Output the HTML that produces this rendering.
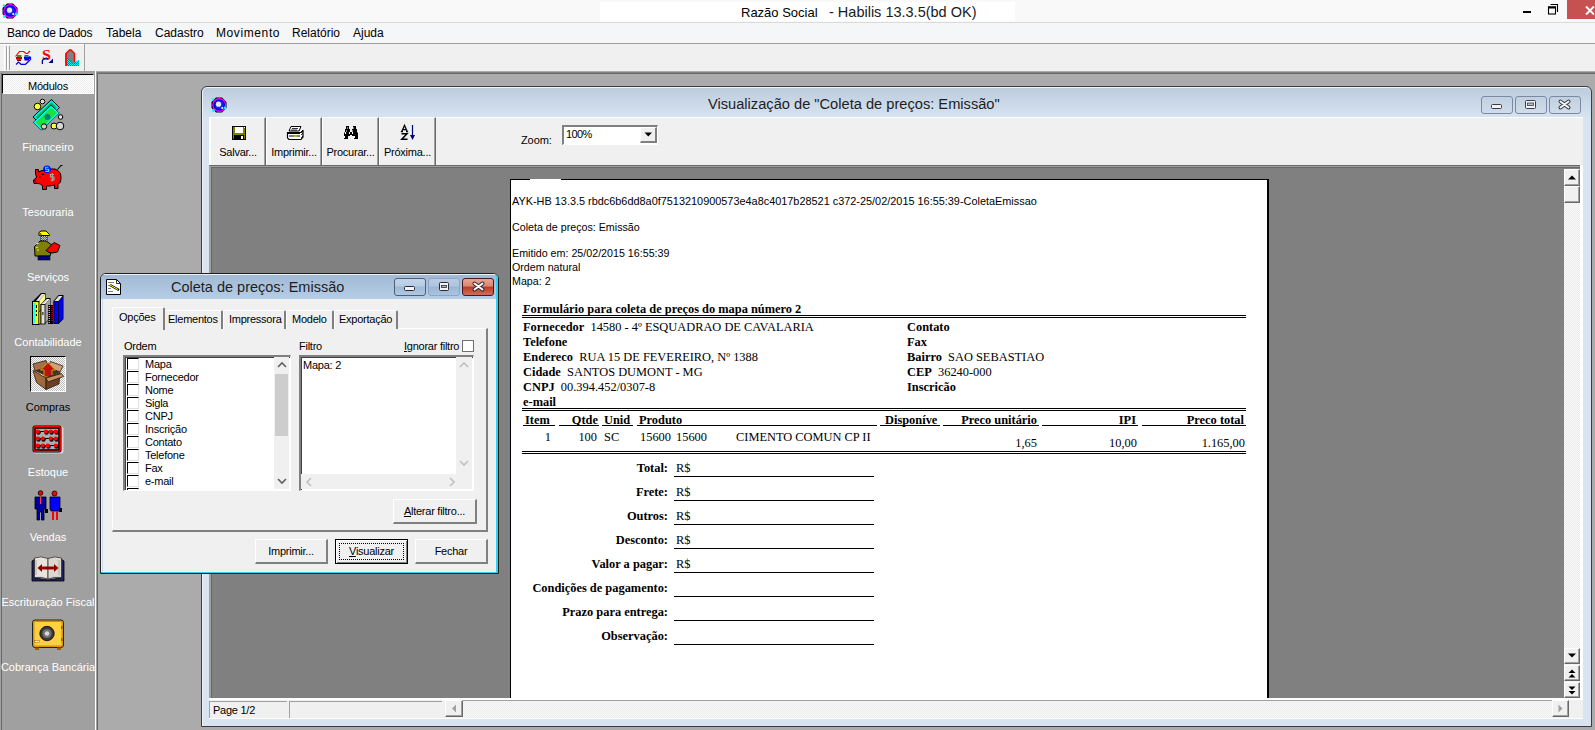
<!DOCTYPE html>
<html><head><meta charset="utf-8">
<style>
*{margin:0;padding:0;box-sizing:border-box}
html,body{width:1595px;height:730px;overflow:hidden;background:#ababab;font-family:"Liberation Sans",sans-serif;font-size:12px;color:#000}
.a{position:absolute}
.t{position:absolute;white-space:nowrap;line-height:1}
svg{position:absolute;overflow:visible}
/* main window */
#titlebar{left:0;top:0;width:1595px;height:23px;background:#f9f9f9;border-bottom:1px solid #dadada}
#menubar{left:0;top:23px;width:1595px;height:21px;background:#f5f6f7;border-bottom:1px solid #a0a0a0}
#toolbar{left:0;top:44px;width:1595px;height:27px;background:#f0f0f0}
#panel{left:0;top:71px;width:96px;height:659px;background:#a0a0a0}
#mdi{left:96px;top:72px;width:1499px;height:658px;background:#ababab;border-left:1px solid #a0a0a0;border-top:1px solid #808080;box-shadow:inset 1px 1px 0 #696969}
.menu{top:27px;font-size:12px;color:#000}
.lbl{color:#fff;width:96px;text-align:center;left:0;letter-spacing:0 !important}
/* preview window */
#pw{left:201px;top:86px;width:1391px;height:641px;background:linear-gradient(#bccbdc 0,#d6e3f1 30px,#d8e4f1 31px);border:1px solid #3c3c3c;border-radius:6px 6px 0 0;box-shadow:inset 0 1px 0 #eef3f9,inset 1px 0 0 #eef3f9}
.tbtn{top:117px;height:48px;background:#f0f0f0;border-top:1px solid #fff;border-left:1px solid #fff;border-right:1px solid #696969;box-shadow:inset -1px 0 0 #a0a0a0}
.tbtn .t{font-size:11px;letter-spacing:-0.25px;width:100%;text-align:center;top:29px;left:0}
.wbtn{top:96px;height:18px;border:1px solid #7a8aa6;border-radius:3px;background:linear-gradient(#c2d0df,#d0dcea)}

.b{font-weight:bold}
#serif .t{margin-top:1px}
.r{text-align:right}
.dl{height:3px;border-top:1px solid #000;border-bottom:1px solid #000}
.hd{top:425px;height:1px;background:#000}
.ul{left:674px;width:200px;height:1px;background:#000}

.dbtn{top:278px;height:18px;border:1px solid #4e5f78;border-radius:3px}
.tab{top:310px;height:19px;background:#f0f0f0;border-top:1px solid #fff;border-left:1px solid #fff;border-right:2px solid #808080;border-radius:2px 2px 0 0}
.sf{font-size:11px;letter-spacing:-0.25px}
.sunk{background:#fff;border-top:2px solid #808080;border-left:2px solid #808080;border-right:1px solid #fff;border-bottom:1px solid #fff;box-shadow:inset 1px 1px 0 #404040}
.cb{width:12px;height:12px;border:1px solid #000;border-right-color:#e0e0e0;border-bottom-color:#e0e0e0;background:#fff}
.btn{background:#f0f0f0;border-top:1px solid #fff;border-left:1px solid #fff;border-right:2px solid #808080;border-bottom:2px solid #808080}

.hatch{background:repeating-conic-gradient(#fafafa 0 25%,#ececec 0 50%) 0 0/2px 2px}
.sbtn{width:16px;background:#f0f0f0;border-top:1px solid #fff;border-left:1px solid #fff;border-right:1px solid #696969;border-bottom:1px solid #696969;box-shadow:inset -1px -1px 0 #a0a0a0}
</style></head>
<body>
<div id="titlebar" class="a"></div>
<div class="a" style="left:600px;top:2px;width:415px;height:19px;background:#fff"></div>
<div class="t" style="left:741px;top:6px;font-size:13px;color:#000">Razão Social</div>
<div class="t" style="left:829px;top:5px;font-size:14.5px;color:#1a1a1a">- Habilis 13.3.5(bd OK)</div>
<div class="a" style="left:1567px;top:0;width:28px;height:19px;background:#c75050"></div>

<div id="menubar" class="a"></div>
<div class="t menu" style="left:7px;letter-spacing:-0.25px">Banco de Dados</div>
<div class="t menu" style="left:106px">Tabela</div>
<div class="t menu" style="left:155px">Cadastro</div>
<div class="t menu" style="left:216px;letter-spacing:0.6px">Movimento</div>
<div class="t menu" style="left:292px">Relatório</div>
<div class="t menu" style="left:353px">Ajuda</div>

<div id="toolbar" class="a"></div>
<div class="a" style="left:84px;top:44px;width:1px;height:27px;background:#c8c8c8"></div>


<!-- main title icon & controls -->
<svg width="16" height="16" viewBox="0 0 16 16" style="left:2px;top:3px">
<path d="M5 0.5 H11 L15.5 5 V11 L11 15.5 H5 L0.5 11 V5 Z" fill="#000"/>
<circle cx="8.2" cy="8" r="7" fill="#ff00ff"/>
<circle cx="8.2" cy="8" r="5.8" fill="#0000e0"/>
<circle cx="8.5" cy="8" r="4.2" fill="#2020ff"/>
<circle cx="7.5" cy="7.2" r="2.6" fill="#e8e8f0"/>
<circle cx="11.2" cy="11" r="1" fill="#fff"/>
<circle cx="1.8" cy="2.5" r="1.3" fill="#00ffff"/>
<circle cx="2.3" cy="13.5" r="1.4" fill="#00ffff"/>
<circle cx="14" cy="11" r="1.4" fill="#00ffff"/>
</svg>
<div class="a" style="left:1523px;top:11px;width:8px;height:2px;background:#000"></div>
<svg style="left:1546px;top:3px" width="14" height="12" viewBox="0 0 14 12"><path d="M4.5 1.5 H11.5 V9" stroke="#000" stroke-width="1.1" fill="none"/><rect x="2.5" y="4" width="7" height="7" stroke="#000" stroke-width="1.1" fill="none"/><rect x="2" y="3.5" width="8" height="2" fill="#000"/></svg>
<svg style="left:1585px;top:5.5px" width="10" height="9" viewBox="0 0 10 9"><path d="M1 0.5 L9 8.5 M9 0.5 L1 8.5" stroke="#fff" stroke-width="1.8"/></svg>
<!-- toolbar grip & icons -->
<div class="a" style="left:0;top:44px;width:84px;height:1px;background:#fff"></div>
<div class="a" style="left:84px;top:44px;width:1px;height:27px;background:#a0a0a0"></div>
<div class="a" style="left:4px;top:46px;width:1px;height:24px;background:#fff"></div>
<div class="a" style="left:6px;top:46px;width:1px;height:24px;background:#a0a0a0"></div>
<div class="a" style="left:7px;top:46px;width:1px;height:24px;background:#fff"></div>
<div class="a" style="left:9px;top:46px;width:1px;height:24px;background:#a0a0a0"></div>
<svg style="left:0;top:44px" width="85" height="27" viewBox="0 44 85 27">
 <path d="M15.5 56.5 L19.5 51.5 H23.5 L26 53.5 H27.5 L30 51" stroke="#ff0000" stroke-width="1.2" fill="none"/>
 <path d="M16 57 h6 v2.5 h-6 z" fill="#c00000"/><path d="M17 55 h4.5 v2 h-4.5 z" fill="#608000"/><path d="M17 59.5 h4 v1.5 h-4 z" fill="#800000"/>
 <path d="M24 56.5 h6 v2.5 h-6 z" fill="#0000ff"/><path d="M24.5 55 h4 v1.5 h-4 z" fill="#008060"/><path d="M24.5 59 h4.5 v1.5 h-4.5 z" fill="#000080"/>
 <path d="M16 64.5 L18.5 62 L21 64.3 H25.5 L30.5 59.5 V57.5 L29.5 56.5" stroke="#0000ff" stroke-width="1.2" fill="none"/>
 <text x="46.5" y="60.5" font-family="Liberation Serif" font-weight="bold" font-size="14" fill="#ff0000" text-anchor="middle" transform="translate(46.5 60.5) scale(1.15 1) translate(-46.5 -60.5)">S</text>
 <path d="M42.5 64 Q41.5 60 44.5 58.5 Q47 57.5 48 59" stroke="#000080" stroke-width="1.3" fill="none"/>
 <path d="M48.5 63 L53 58.5 V63 Z" fill="#000080"/>
 <path d="M66 66 V53.5 L69.5 50 H71 L74.5 53.5 V62.5" fill="#808080" stroke="#ff0000" stroke-width="1.4"/>
 <path d="M67 57.5 L73 63.5 L79 60 V66 H67 Z" fill="#1060ff"/>
 <path d="M67 57.5 L73 63.5 L79 60 V66 H67 Z" fill="url(#chk)"/>
 <defs><pattern id="chk" width="2" height="2" patternUnits="userSpaceOnUse"><rect width="1" height="1" fill="#00ffff"/><rect x="1" y="1" width="1" height="1" fill="#00ffff"/></pattern></defs>
 <path d="M66 66 V53.5" stroke="#ff0000" stroke-width="1.4"/>
</svg>
<div id="panel" class="a"></div>
<div class="a" style="left:1px;top:73px;width:1px;height:657px;background:#696969"></div>
<div class="a" style="left:95px;top:71px;width:1px;height:659px;background:#fff"></div>
<div id="mdi" class="a"></div>
<div class="a" style="left:2px;top:74px;width:92px;height:20px;background:#fafafa;border-top:1px solid #000;border-left:1px solid #000;border-right:1px solid #fff;border-bottom:1px solid #fff;background:repeating-conic-gradient(#ffffff 0 25%,#ececec 0 50%) 0 0/2px 2px"></div>
<div class="t sf" style="left:2px;width:92px;text-align:center;top:81px">Módulos</div>
<div class="t sf lbl" style="top:142px">Financeiro</div>
<div class="t sf lbl" style="top:207px">Tesouraria</div>
<div class="t sf lbl" style="top:272px">Serviços</div>
<div class="t sf lbl" style="top:337px">Contabilidade</div>
<div class="t sf lbl" style="top:402px;color:#000">Compras</div>
<div class="t sf lbl" style="top:467px">Estoque</div>
<div class="t sf lbl" style="top:532px">Vendas</div>
<div class="t sf lbl" style="top:597px">Escrituração Fiscal</div>
<div class="t sf lbl" style="top:662px">Cobrança Bancária</div>
<div class="a" style="left:30px;top:356px;width:36px;height:36px;border-top:1px solid #000;border-left:1px solid #000;border-right:1px solid #fff;border-bottom:1px solid #fff;background:repeating-conic-gradient(#ffffff 0 25%,#b8b8b8 0 50%) 0 0/2px 2px"></div>
<svg style="left:0;top:0" width="96" height="730" viewBox="0 0 96 730">
 <!-- Financeiro -->
 <circle cx="37.5" cy="106.5" r="3.3" fill="#ffff40" stroke="#000" stroke-width="1"/>
 <circle cx="42.5" cy="101.5" r="2.3" fill="#e0e0e0" stroke="#000" stroke-width="1"/>
 <polygon points="33,117 51.5,99.5 59.5,107.5 41,125" fill="#008080" stroke="#000" stroke-width="1"/>
 <polygon points="34.5,117 51.5,101 58,107.5 41,123.5" fill="#00c060" stroke="#00ffff" stroke-width="1.2"/>
 <polygon points="33,122.5 51,104.5 59.5,113 41.5,130.5" fill="#000" />
 <polygon points="34.5,122.5 51,106.5 58,113 41.5,129" fill="#20e040" stroke="#00ffff" stroke-width="1.4"/>
 <circle cx="47.5" cy="117" r="3" fill="#008080"/>
 <circle cx="60.5" cy="117" r="2.3" fill="#e0e0e0" stroke="#000" stroke-width="1"/>
 <circle cx="44" cy="126.5" r="2.7" fill="#d0d0d0" stroke="#000" stroke-width="1"/>
 <circle cx="54" cy="126" r="3" fill="#ffff40" stroke="#000" stroke-width="1"/>
 <circle cx="60" cy="126" r="3.8" fill="#d8d8d8" stroke="#000" stroke-width="1"/>
 <!-- Tesouraria pig -->
 <path d="M35.5 169.5 H38.5 V172 L42 170.5 H45 L48 169 H55 L58 170.5 L60.5 173.5 L61 178 L60.5 182 L58 184.5 V188.5 H54.5 V185 L50 186 H46.5 V189.5 H42.5 V186 L40.5 184 L38 183.5 H34 L33.5 180 L36.5 177.5 L35.5 173 Z" fill="#ff0000" stroke="#000" stroke-width="1"/>
 <path d="M41 175 L43 173.5 L44.5 175 Z" fill="#000"/>
 <rect x="39" y="176" width="1.3" height="2" fill="#000"/>
 <path d="M34.5 180.5 L36.5 182" stroke="#000" stroke-width="0.8"/>
 <path d="M57.5 169.5 L61 165.5 H62.5" stroke="#000" stroke-width="1.1" fill="none"/>
 <circle cx="47" cy="169.3" r="3.8" fill="#0000ff"/>
 <path d="M48.6 167.2 h-3 v2 h3 v2.2 h-3.2" stroke="#00ffff" stroke-width="1.1" fill="none"/>
 <path d="M54 174.5 h-3.5 v2.5 h3.5 v3 h-3.5 M52.3 173 V181.5" stroke="#a8a8a8" stroke-width="1.1" fill="none"/>
 <!-- Servicos worker -->
 <path d="M39 235.5 V232.5 L41 231 H46 L49.5 234.5 V235.5 Z" fill="#ffff00" stroke="#000" stroke-width="1"/>
 <rect x="39.5" y="233" width="2" height="2.5" fill="#808000"/>
 <path d="M41 236 H47 V241 H41 Z" fill="#ff4040" stroke="#000" stroke-width="0.8"/>
 <path d="M41 236 H47 V241 H41 Z" fill="url(#chk2)"/>
 <path d="M34.5 246.5 L40 241 H46 L52 245 L51 252 L50 256 H35 Z" fill="#808000" stroke="#000" stroke-width="1"/>
 <path d="M36 244 L39 243 M35.5 248 L38 247 M37 250 L39 250" stroke="#fff" stroke-width="0.8"/>
 <path d="M46 250.5 L54 242.5 L60 245.5 L57.5 252 L52 253 L49 252.5 Z" fill="#ff0000" stroke="#000" stroke-width="1"/>
 <rect x="38" y="256" width="12" height="4" fill="#000080" stroke="#000" stroke-width="0.6"/>
 <defs><pattern id="chk2" width="2" height="2" patternUnits="userSpaceOnUse"><rect width="1" height="1" fill="#c0c0c0"/><rect x="1" y="1" width="1" height="1" fill="#c0c0c0"/></pattern></defs>
 <!-- Contabilidade books -->
 <path d="M32.5 301.5 L41 293 H45.5 V305 L39 313 V324 H32.5 Z" fill="#000"/>
 <path d="M36 301 L41.5 294 H45 L39 301 Z" fill="#e0e0e0"/>
 <path d="M39 301 L45 294 V305 L39 312 Z" fill="#ffff80"/>
 <rect x="32.5" y="301.5" width="6.5" height="23" fill="#ffff00" stroke="#000" stroke-width="1"/>
 <rect x="33.3" y="302.5" width="1.6" height="21" fill="#00ffff"/>
 <rect x="35.8" y="305" width="1.2" height="3" fill="#000"/><rect x="35.8" y="310" width="1.2" height="2" fill="#000"/><rect x="35.8" y="314" width="1.2" height="2" fill="#000"/>
 <path d="M39 312 L45 305 V323 L39 324 Z" fill="#ffff00" stroke="#000" stroke-width="0.6"/>
 <path d="M40.5 304.5 L46.5 298 H50.5 V318 L45 324 H40.5 Z" fill="#000"/>
 <path d="M41.5 304 L46.8 299 H50 L45 304 Z" fill="#e8e8e8"/>
 <path d="M45 304 L50 299 V318 L45 323 Z" fill="#a0a0a0"/>
 <rect x="41" y="304.5" width="4" height="19.5" fill="#e0e0e0" stroke="#000" stroke-width="0.8"/>
 <rect x="42.4" y="312" width="1" height="3" fill="#000"/>
 <rect x="48" y="305" width="5" height="19" fill="#000"/>
 <path d="M49.2 306 V323" stroke="#fff" stroke-width="1" stroke-dasharray="1 1"/>
 <path d="M52 306 V322" stroke="#ff0000" stroke-width="1.2" stroke-dasharray="1 1"/>
 <path d="M53.5 301 L58.5 295 H63.5 V319 L58.5 324 H53.5 Z" fill="#000"/>
 <path d="M54.5 301 L58.8 296 H62.5 L58.5 301 Z" fill="#e0e0e0"/>
 <path d="M58.5 301.5 L62.8 296.5 V318.5 L58.5 323 Z" fill="#0000ff"/>
 <rect x="54" y="301.5" width="4.5" height="22" fill="#0000ff" stroke="#000" stroke-width="0.8"/>
 <rect x="55" y="303.5" width="1" height="1.5" fill="#000"/>
 <!-- Compras box -->
 <path d="M35 371 L47 366.5 L60 372 L48 377 Z" fill="#4a2c18"/>
 <path d="M33 364 L46 360.5 L48 367 L35 371 Z" fill="#a87048" stroke="#2a1a10" stroke-width="0.8"/>
 <path d="M50.5 361.5 L63 366 L60 372 L48 367 Z" fill="#d4a07a" stroke="#2a1a10" stroke-width="0.8"/>
 <path d="M48 362.5 L55.5 370 H52 V377 H44 V370 H40.5 Z" fill="#c01010" stroke="#c0c000" stroke-width="0.9"/>
 <path d="M33 370.5 L46 378 V389.5 L36.5 382.5 Z" fill="#a06a40" stroke="#2a1a10" stroke-width="0.8"/>
 <path d="M46 378 L60 372.5 L59 384 L46 389.5 Z" fill="#6a4024" stroke="#2a1a10" stroke-width="0.8"/>
 <path d="M46 378 L61.5 373.5 L63.5 376.5 L48 382 Z" fill="#c89060" stroke="#2a1a10" stroke-width="0.8"/>
 <!-- Estoque abacus -->
 <rect x="33.5" y="426.5" width="30" height="27" rx="2.5" fill="#d8d8d8"/>
 <rect x="32.5" y="425.5" width="29" height="27" rx="2.5" fill="#000"/>
 <rect x="33.8" y="426.8" width="26.4" height="24.4" rx="1.5" fill="none" stroke="#ff0000" stroke-width="1.4"/>
 <rect x="35.3" y="428.3" width="23.4" height="21.4" fill="#a8b0b0" stroke="#000" stroke-width="0.8"/>
 <path d="M35.5 431.5 H59 M35.5 438.5 H59 M35.5 445.5 H59" stroke="#000" stroke-width="1.2"/>
 <g fill="#000">
  <circle cx="38.5" cy="432.5" r="2.2"/><circle cx="46.5" cy="432.5" r="2.2"/><circle cx="51.5" cy="432.5" r="2.2"/><circle cx="56.5" cy="432.5" r="2.2"/>
  <circle cx="38.5" cy="439.5" r="2.2"/><circle cx="43.5" cy="439.5" r="2.2"/><circle cx="51.5" cy="439.5" r="2.2"/><circle cx="56.5" cy="439.5" r="2.2"/>
  <circle cx="38.5" cy="446.5" r="2.2"/><circle cx="43.5" cy="446.5" r="2.2"/><circle cx="48.5" cy="446.5" r="2.2"/><circle cx="56.5" cy="446.5" r="2.2"/>
 </g>
 <g fill="#ff0000">
  <circle cx="37.7" cy="431.5" r="2"/><circle cx="45.7" cy="431.5" r="2"/><circle cx="50.7" cy="431.5" r="2"/><circle cx="55.7" cy="431.5" r="2"/>
  <circle cx="37.7" cy="438.5" r="2"/><circle cx="42.7" cy="438.5" r="2"/><circle cx="50.7" cy="438.5" r="2"/><circle cx="55.7" cy="438.5" r="2"/>
  <circle cx="37.7" cy="445.5" r="2"/><circle cx="42.7" cy="445.5" r="2"/><circle cx="47.7" cy="445.5" r="2"/><circle cx="55.7" cy="445.5" r="2"/>
 </g>
 <!-- Vendas -->
 <circle cx="40.5" cy="493" r="2.3" fill="#ff0000" stroke="#000" stroke-width="0.8"/>
 <path d="M35 497 h11 v12 h-2 v11 h-2.5 v-8 h-2 v8 h-2.5 v-11 h-2 z" fill="#0000a0" stroke="#000" stroke-width="0.8"/>
 <rect x="40" y="497" width="1.3" height="7" fill="#ff4040"/>
 <rect x="45" y="509" width="3" height="4" fill="#000"/>
 <circle cx="54.5" cy="493.5" r="2.5" fill="#ff0000" stroke="#000" stroke-width="0.8"/>
 <path d="M50 497 h10 v12 l-1 2 h-8 l-1 -2 z" fill="#0000ff" stroke="#000" stroke-width="0.8"/>
 <rect x="52" y="511" width="2" height="9" fill="#ff0000"/><rect x="56" y="511" width="2" height="9" fill="#ff0000"/>
 <rect x="59" y="508" width="3" height="4" fill="#000"/>
 <!-- Escrituracao book -->
 <path d="M32 561 L35 559 V578 L48 580 L61 578 V559 L64 561 V581 H32 Z" fill="#202060" stroke="#000" stroke-width="0.8"/>
 <path d="M34.5 558 Q41 555.5 48 558.5 V579 Q41 576.5 34.5 577.5 Z" fill="#e8e4dc" stroke="#303030" stroke-width="0.8"/>
 <path d="M61.5 558 Q55 555.5 48 558.5 V579 Q55 576.5 61.5 577.5 Z" fill="#dcd8d0" stroke="#303030" stroke-width="0.8"/>
 <path d="M36 560 V575 M59 560 V575" stroke="#b0aca4" stroke-width="1"/>
 <path d="M37.5 568 L42 564 V566.5 H54 V564 L58.5 568 L54 572 V569.5 H42 V572 Z" fill="#900000"/>
 <!-- Cobranca safe -->
 <rect x="32.5" y="620" width="31" height="27.5" rx="2.5" fill="#e8a818" stroke="#202020" stroke-width="1"/>
 <rect x="34" y="621.5" width="28" height="24.5" rx="1.5" fill="#ffd040" stroke="#c08000" stroke-width="0.8"/>
 <circle cx="47" cy="633.5" r="7.2" fill="#383838" stroke="#000" stroke-width="0.8"/>
 <circle cx="47" cy="633.5" r="4.6" fill="#707070"/>
 <circle cx="47" cy="633.5" r="2.3" fill="#d8d8d8"/>
 <rect x="61" y="626" width="1.5" height="3" fill="#a06000"/><rect x="61" y="638" width="1.5" height="3" fill="#a06000"/>
 <rect x="34.5" y="640.5" width="5" height="2" fill="#fff0a0" stroke="#a06000" stroke-width="0.5"/>
 <rect x="35" y="647.5" width="4" height="2.5" fill="#a06000"/><rect x="57" y="647.5" width="4" height="2.5" fill="#a06000"/>
</svg>

<!-- preview window -->
<div id="pw" class="a"></div>
<div class="t" style="left:708px;top:97px;font-size:14.65px;color:#1e1e1e">Visualização de "Coleta de preços: Emissão"</div>
<div class="a wbtn" style="left:1481px;width:32px"></div>
<div class="a wbtn" style="left:1515px;width:32px"></div>
<div class="a wbtn" style="left:1549px;width:32px"></div>
<div class="a" style="left:209px;top:117px;width:1374px;height:49px;background:#f0f0f0;border-top:1px solid #fff;border-left:1px solid #fff"></div><svg width="16" height="16" viewBox="0 0 16 16" style="left:211px;top:97px">
<path d="M5 0.5 H11 L15.5 5 V11 L11 15.5 H5 L0.5 11 V5 Z" fill="#000"/>
<circle cx="8.2" cy="8" r="7" fill="#ff00ff"/>
<circle cx="8.2" cy="8" r="5.8" fill="#0000e0"/>
<circle cx="8.5" cy="8" r="4.2" fill="#2020ff"/>
<circle cx="7.5" cy="7.2" r="2.6" fill="#e8e8f0"/>
<circle cx="11.2" cy="11" r="1" fill="#fff"/>
<circle cx="1.8" cy="2.5" r="1.3" fill="#00ffff"/>
<circle cx="2.3" cy="13.5" r="1.4" fill="#00ffff"/>
<circle cx="14" cy="11" r="1.4" fill="#00ffff"/>
</svg>
<svg style="left:1481px;top:96px" width="100" height="18" viewBox="1481 96 100 18">
 <rect x="1491.5" y="104.5" width="10" height="4" rx="1" fill="#f4f4f4" stroke="#3a3a4a" stroke-width="1"/>
 <rect x="1525.5" y="100.5" width="10" height="8" rx="1" fill="#f4f4f4" stroke="#3a3a4a" stroke-width="1"/>
 <rect x="1527.5" y="103" width="6" height="2.5" fill="#b0c0d4" stroke="#3a3a4a" stroke-width="0.8"/>
 <path d="M1560.5 101.5 L1568.5 107.5 M1568.5 101.5 L1560.5 107.5" stroke="#3a3a4a" stroke-width="4" stroke-linecap="round"/>
 <path d="M1560.5 101.5 L1568.5 107.5 M1568.5 101.5 L1560.5 107.5" stroke="#f4f4f4" stroke-width="2" stroke-linecap="round"/>
</svg>

<div class="a tbtn" style="left:210px;width:56px"><div class="t">Salvar...</div></div>
<div class="a tbtn" style="left:266px;width:56px"><div class="t">Imprimir...</div></div>
<div class="a tbtn" style="left:322px;width:57px"><div class="t">Procurar...</div></div>
<div class="a tbtn" style="left:379px;width:57px"><div class="t">Próxima...</div></div>
<!-- preview toolbar icons -->
<svg style="left:225px;top:120px" width="200" height="25" viewBox="225 120 200 25">
 <rect x="232" y="126" width="14" height="14" fill="#000"/>
 <rect x="233" y="127" width="12" height="12" fill="#808000"/>
 <rect x="235" y="126" width="8" height="7" fill="#000"/>
 <rect x="235" y="127" width="8" height="6" fill="#fff"/>
 <rect x="234" y="135" width="10" height="4" fill="#000"/>
 <rect x="241" y="136" width="2" height="3" fill="#fff"/>
 <rect x="244" y="127" width="1" height="1" fill="#fff"/>
 <!-- printer -->
 <path d="M291 126.5 H301 L299 131 H289 Z" fill="#fff" stroke="#000" stroke-width="1"/>
 <path d="M292 128.5 H298 M291 130 H297" stroke="#000" stroke-width="0.8"/>
 <path d="M287.5 132.5 H301 L303 131 V137 L301 139.5 H289 L287.5 138 Z" fill="#fff" stroke="#000" stroke-width="1.2"/>
 <path d="M288 133.5 H300 M289 136 H300" stroke="#000" stroke-width="1"/>
 <rect x="294" y="135.6" width="3" height="1" fill="#e0e000"/>
 <path d="M301 132 L303 130 M301 135 L303 133 M301 138 L303 136" stroke="#000" stroke-width="0.8"/>
 <!-- binoculars -->
 <path d="M346 126 h3 v3 h1 v3 h2 v-3 h1 v-3 h3 v3 h1 v3 l1 1 v6 h-4 v-3 h-2 v-1 h-2 v1 h-2 v3 h-4 v-6 l1 -1 v-3 h1 z" fill="#000"/>
 <rect x="347" y="127.5" width="1" height="1" fill="#fff"/><rect x="353" y="127.5" width="1" height="1" fill="#fff"/>
 <rect x="346" y="130.5" width="1" height="1" fill="#fff"/><rect x="352" y="130.5" width="1" height="1" fill="#fff"/>
 <rect x="345" y="132" width="1" height="2" fill="#fff"/><rect x="349" y="132" width="1" height="2" fill="#fff"/><rect x="352" y="132" width="1" height="2" fill="#fff"/>
 <rect x="344" y="136" width="1" height="2" fill="#fff"/><rect x="354" y="136" width="1" height="2" fill="#fff"/>
 <!-- AZ -->
 <path d="M401.8 131.5 L404.5 125.3 L407.2 131.5 M403 129.6 H406 M400.8 131.6 H403 M406 131.6 H408.2" stroke="#000" stroke-width="1.3" fill="none"/>
 <path d="M401.5 133.8 H407 L401.8 139.3 H407.5" stroke="#000" stroke-width="1.5" fill="none"/>
 <path d="M412.5 125 V136" stroke="#000080" stroke-width="1.2"/>
 <path d="M410 135 H415 L412.5 140 Z" fill="#000080"/>
</svg>

<div class="t" style="left:521px;top:135px;font-size:11px;letter-spacing:-0.1px">Zoom:</div>
<div class="a" style="left:562px;top:125px;width:96px;height:20px;background:#fff;border-top:2px solid #808080;border-left:2px solid #808080;border-right:1px solid #fff;border-bottom:1px solid #fff"></div>
<div class="t" style="left:566px;top:129px;font-size:11px;letter-spacing:-0.6px">100%</div>
<div class="a" style="left:640px;top:127px;width:17px;height:16px;background:#f0f0f0;border-top:1px solid #fff;border-left:1px solid #fff;border-right:2px solid #808080;border-bottom:2px solid #808080"></div>
<svg style="left:644px;top:132px" width="9" height="5"><path d="M0.5 0.5 H8 L4.25 4.5 Z" fill="#000"/></svg>


<!-- gray area -->
<div class="a" style="left:209px;top:165px;width:1374px;height:533px;background:#fff"></div><div class="a" style="left:209px;top:165px;width:1371px;height:533px;background:#808080;border-top:1px solid #696969;border-left:1px solid #a0a0a0;box-shadow:inset 1px 1px 0 #a0a0a0,inset 2px 2px 0 #696969"></div>
<div class="a" style="left:510px;top:179px;width:759px;height:519px;background:#fff;border-top:1px solid #000;border-left:1px solid #000;border-right:2px solid #000"></div>
<!-- vscroll -->
<div class="a hatch" style="left:1564px;top:169px;width:16px;height:529px"></div>
<div class="a sbtn" style="left:1564px;top:169px;height:17px"></div>
<svg style="left:1567px;top:174px" width="10" height="6"><path d="M1 5.5 L5 1.5 L9 5.5 Z" fill="#000"/></svg>
<div class="a sbtn" style="left:1564px;top:186px;height:17px"></div>
<div class="a sbtn" style="left:1564px;top:648px;height:16px"></div>
<svg style="left:1567px;top:653px" width="10" height="6"><path d="M1 0.5 L5 4.5 L9 0.5 Z" fill="#000"/></svg>
<div class="a sbtn" style="left:1564px;top:665px;height:16px"></div>
<svg style="left:1568px;top:669px" width="8" height="9"><path d="M0.5 4 L4 0.5 L7.5 4 Z M0.5 8.5 L4 5 L7.5 8.5 Z" fill="#000"/></svg>
<div class="a sbtn" style="left:1564px;top:682px;height:16px"></div>
<svg style="left:1568px;top:686px" width="8" height="9"><path d="M0.5 0.5 L4 4 L7.5 0.5 Z M0.5 5 L4 8.5 L7.5 5 Z" fill="#000"/></svg>
<!-- status bar -->
<div class="a" style="left:209px;top:698px;width:1374px;height:21px;background:#f0f0f0;border-top:2px solid #fff;border-bottom:1px solid #fff"></div>
<div class="a" style="left:209px;top:701px;width:78px;height:17px;border-top:1px solid #a0a0a0;border-left:1px solid #a0a0a0"></div>
<div class="t sf" style="left:213px;top:705px">Page 1/2</div>
<div class="a" style="left:289px;top:701px;width:153px;height:17px;border-top:1px solid #a0a0a0;border-left:1px solid #a0a0a0"></div>
<div class="a hatch" style="left:445px;top:700px;width:1124px;height:17px;border-top:1px solid #a0a0a0"></div>
<div class="a sbtn" style="left:445px;top:700px;width:18px;height:17px"></div>
<svg style="left:451px;top:704px" width="6" height="10"><path d="M5 0.5 L1 4.5 L5 8.5 Z" fill="#a0a0a0"/></svg>
<div class="a sbtn" style="left:1552px;top:700px;width:17px;height:17px"></div>
<svg style="left:1558px;top:704px" width="6" height="10"><path d="M0.5 0.5 L4.5 4.5 L0.5 8.5 Z" fill="#a0a0a0"/></svg>


<!-- paper content -->
<div class="a" style="left:530px;top:179px;width:31px;height:1px;background:#fff"></div>
<div id="paper" style="font-family:'Liberation Sans',sans-serif;font-size:10.7px">
<div class="t" style="left:512px;top:196px;font-size:10.9px">AYK-HB 13.3.5 rbdc6b6dd8a0f7513210900573e4a8c4017b28521 c372-25/02/2015 16:55:39-ColetaEmissao</div>
<div class="t" style="left:512px;top:222px">Coleta de preços: Emissão</div>
<div class="t" style="left:512px;top:248px">Emitido em: 25/02/2015 16:55:39</div>
<div class="t" style="left:512px;top:262px">Ordem natural</div>
<div class="t" style="left:512px;top:276px">Mapa: 2</div>
</div>
<div id="serif" style="font-family:'Liberation Serif',serif;font-size:12.4px">
<div class="t b" style="left:523px;top:302px">Formulário para coleta de preços do mapa número 2</div>
<div class="a dl" style="left:522px;top:315px;width:724px"></div>
<div class="t" style="left:523px;top:320px"><b>Fornecedor</b>&nbsp; 14580 - 4º ESQUADRAO DE CAVALARIA</div>
<div class="t" style="left:523px;top:335px"><b>Telefone</b></div>
<div class="t" style="left:523px;top:350px"><b>Endereco</b>&nbsp; RUA 15 DE FEVEREIRO, Nº 1388</div>
<div class="t" style="left:523px;top:365px"><b>Cidade</b>&nbsp; SANTOS DUMONT - MG</div>
<div class="t" style="left:523px;top:380px"><b>CNPJ</b>&nbsp; 00.394.452/0307-8</div>
<div class="t" style="left:523px;top:395px"><b>e-mail</b></div>
<div class="t" style="left:907px;top:320px"><b>Contato</b></div>
<div class="t" style="left:907px;top:335px"><b>Fax</b></div>
<div class="t" style="left:907px;top:350px"><b>Bairro</b>&nbsp; SAO SEBASTIAO</div>
<div class="t" style="left:907px;top:365px"><b>CEP</b>&nbsp; 36240-000</div>
<div class="t" style="left:907px;top:380px"><b>Inscricão</b></div>
<div class="a dl" style="left:522px;top:408px;width:724px"></div>
<div class="a hd" style="left:523px;width:32px"></div><div class="t b" style="left:525px;top:413px">Item</div>
<div class="a hd" style="left:559px;width:40px"></div><div class="t b r" style="left:559px;width:39px;top:413px">Qtde</div>
<div class="a hd" style="left:602px;width:31px"></div><div class="t b" style="left:604px;top:413px">Unid</div>
<div class="a hd" style="left:637px;width:240px"></div><div class="t b" style="left:639px;top:413px">Produto</div>
<div class="a hd" style="left:880px;width:60px"></div><div class="t b" style="left:885px;top:413px">Disponíve</div>
<div class="a hd" style="left:943px;width:96px"></div><div class="t b r" style="left:943px;width:94px;top:413px">Preco unitário</div>
<div class="a hd" style="left:1042px;width:96px"></div><div class="t b r" style="left:1042px;width:94px;top:413px">IPI</div>
<div class="a hd" style="left:1142px;width:104px"></div><div class="t b r" style="left:1142px;width:102px;top:413px">Preco total</div>
<div class="t r" style="left:523px;width:28px;top:430px">1</div>
<div class="t r" style="left:559px;width:38px;top:430px">100</div>
<div class="t" style="left:604px;top:430px">SC</div>
<div class="t" style="left:640px;top:430px">15600</div>
<div class="t" style="left:676px;top:430px">15600</div>
<div class="t" style="left:736px;top:430px">CIMENTO COMUN CP II</div>
<div class="t r" style="left:943px;width:94px;top:436px">1,65</div>
<div class="t r" style="left:1042px;width:95px;top:436px">10,00</div>
<div class="t r" style="left:1142px;width:103px;top:436px">1.165,00</div>
<div class="a dl" style="left:522px;top:451px;width:724px"></div>
<div class="t b r" style="left:520px;width:148px;top:461px">Total:</div>
<div class="t b r" style="left:520px;width:148px;top:485px">Frete:</div>
<div class="t b r" style="left:520px;width:148px;top:509px">Outros:</div>
<div class="t b r" style="left:520px;width:148px;top:533px">Desconto:</div>
<div class="t b r" style="left:520px;width:148px;top:557px">Valor a pagar:</div>
<div class="t b r" style="left:520px;width:148px;top:581px">Condições de pagamento:</div>
<div class="t b r" style="left:520px;width:148px;top:605px">Prazo para entrega:</div>
<div class="t b r" style="left:520px;width:148px;top:629px">Observação:</div>
<div class="t" style="left:676px;top:461px">R$</div>
<div class="t" style="left:676px;top:485px">R$</div>
<div class="t" style="left:676px;top:509px">R$</div>
<div class="t" style="left:676px;top:533px">R$</div>
<div class="t" style="left:676px;top:557px">R$</div>
<div class="a ul" style="top:476px"></div>
<div class="a ul" style="top:500px"></div>
<div class="a ul" style="top:524px"></div>
<div class="a ul" style="top:548px"></div>
<div class="a ul" style="top:572px"></div>
<div class="a ul" style="top:596px"></div>
<div class="a ul" style="top:620px"></div>
<div class="a ul" style="top:644px"></div>
</div>

<!-- dialog -->
<div class="a" style="left:100px;top:273px;width:399px;height:301px;background:#f0f0f0;border:1px solid #202020;border-radius:6px 6px 0 0;overflow:hidden">
 <div class="a" style="left:0;top:0;width:397px;height:25px;background:linear-gradient(#a2b9d3,#b6cde7);border-top:1px solid #e8f0f8"></div>
 <div class="a" style="left:395px;top:0;width:2px;height:300px;background:#2fd0f0"></div>
 <div class="a" style="left:0;top:25px;width:1px;height:275px;background:#f4f8fc"></div><div class="a" style="left:1px;top:25px;width:1px;height:273px;background:#c4d8ee"></div>
 <div class="a" style="left:0;top:298px;width:397px;height:2px;background:#2fd0f0"></div>
</div>
<div class="t" style="left:171px;top:280px;font-size:14.5px;color:#1e1e1e">Coleta de preços: Emissão</div>
<div class="a dbtn" style="left:394px;width:32px;background:linear-gradient(#c3d5ea 0,#b5cbe4 45%,#9fb8d5 50%,#b0c8e4 100%)"></div>
<div class="a dbtn" style="left:428px;width:32px;border-color:#8ea4c0;background:linear-gradient(#b8cde6 0,#aec5e0 45%,#9cb5d3 50%,#aac3e0 100%)"></div>
<div class="a dbtn" style="left:462px;width:32px;border-color:#4a1818;background:linear-gradient(#e8a592 0,#d98572 45%,#bb3b22 50%,#cf6f5a 100%)"></div>

<svg style="left:100px;top:273px" width="399" height="26" viewBox="100 273 399 26">
 <path d="M106.5 279.5 H116.5 L120.5 283.5 V294.5 H106.5 Z" fill="#fff" stroke="#000" stroke-width="1"/>
 <path d="M116.5 279.5 V283.5 H120.5" fill="none" stroke="#000" stroke-width="0.8"/>
 <path d="M108 282.5 H114 M108 285.5 H112 M108 288.5 H111 M108 291.5 H113" stroke="#606060" stroke-width="0.8"/>
 <path d="M110 285 L119 290" stroke="#000" stroke-width="2.2"/>
 <path d="M110 285 L118 289.5" stroke="#ffff00" stroke-width="1"/>
 <rect x="404.5" y="286.5" width="10" height="4" rx="1" fill="#f4f4f4" stroke="#2a2a3a" stroke-width="1"/>
 <rect x="439.5" y="282.5" width="9" height="8" rx="1" fill="#f4f4f4" stroke="#2a2a3a" stroke-width="1"/>
 <rect x="441.5" y="285.5" width="5" height="2" fill="#a8b8cc" stroke="#2a2a3a" stroke-width="0.8"/>
 <path d="M474.5 283.5 L482.5 289.5 M482.5 283.5 L474.5 289.5" stroke="#2a2a3a" stroke-width="4" stroke-linecap="round"/>
 <path d="M474.5 283.5 L482.5 289.5 M482.5 283.5 L474.5 289.5" stroke="#fff" stroke-width="2" stroke-linecap="round"/>
</svg>
<!-- tabs -->
<div class="a" style="left:112px;top:328px;width:376px;height:204px;border-top:1px solid #fff;border-left:1px solid #fff;border-right:2px solid #808080;border-bottom:2px solid #808080"></div>
<div class="a tab" style="left:164px;width:59px"></div>
<div class="a tab" style="left:223px;width:63px"></div>
<div class="a tab" style="left:286px;width:48px"></div>
<div class="a tab" style="left:334px;width:64px"></div>
<div class="a" style="left:112px;top:307px;width:53px;height:23px;background:#f0f0f0;border-top:1px solid #fff;border-left:1px solid #fff;border-right:2px solid #808080;border-radius:2px 2px 0 0"></div>
<div class="t sf" style="left:119px;top:312px">Opções</div>
<div class="t sf" style="left:168px;top:314px">Elementos</div>
<div class="t sf" style="left:229px;top:314px">Impressora</div>
<div class="t sf" style="left:292px;top:314px">Modelo</div>
<div class="t sf" style="left:339px;top:314px">Exportação</div>
<div class="t sf" style="left:124px;top:341px">Ordem</div>
<div class="a sunk" style="left:123px;top:355px;width:168px;height:136px"></div>
<div class="a" style="left:274px;top:357px;width:15px;height:132px;background:#f0f0f0"></div>
<div class="a" style="left:275px;top:374px;width:13px;height:62px;background:#cdcdcd"></div>
<div class="a cb" style="left:127px;top:358px"></div><div class="t sf" style="left:145px;top:359px">Mapa</div>
<div class="a cb" style="left:127px;top:371px"></div><div class="t sf" style="left:145px;top:372px">Fornecedor</div>
<div class="a cb" style="left:127px;top:384px"></div><div class="t sf" style="left:145px;top:385px">Nome</div>
<div class="a cb" style="left:127px;top:397px"></div><div class="t sf" style="left:145px;top:398px">Sigla</div>
<div class="a cb" style="left:127px;top:410px"></div><div class="t sf" style="left:145px;top:411px">CNPJ</div>
<div class="a cb" style="left:127px;top:423px"></div><div class="t sf" style="left:145px;top:424px">Inscrição</div>
<div class="a cb" style="left:127px;top:436px"></div><div class="t sf" style="left:145px;top:437px">Contato</div>
<div class="a cb" style="left:127px;top:449px"></div><div class="t sf" style="left:145px;top:450px">Telefone</div>
<div class="a cb" style="left:127px;top:462px"></div><div class="t sf" style="left:145px;top:463px">Fax</div>
<div class="a cb" style="left:127px;top:475px"></div><div class="t sf" style="left:145px;top:476px">e-mail</div>
<div class="a" style="left:125px;top:488px;width:148px;height:2px;overflow:hidden"><div class="a cb" style="left:2px;top:0"></div></div>
<svg style="left:277px;top:362px" width="10" height="6"><path d="M1 5 L5 1 L9 5" stroke="#606060" stroke-width="1.6" fill="none"/></svg>
<svg style="left:277px;top:478px" width="10" height="6"><path d="M1 1 L5 5 L9 1" stroke="#606060" stroke-width="1.6" fill="none"/></svg>
<div class="t sf" style="left:299px;top:341px">Filtro</div>
<div class="t sf" style="left:404px;top:341px"><u>I</u>gnorar filtro</div>
<div class="a cb" style="left:462px;top:340px;border-color:#707070"></div>
<div class="a sunk" style="left:299px;top:355px;width:175px;height:136px"></div>
<div class="a" style="left:456px;top:357px;width:16px;height:132px;background:#f0f0f0"></div>
<div class="a" style="left:301px;top:474px;width:171px;height:15px;background:#f0f0f0"></div>
<svg style="left:459px;top:362px" width="10" height="6"><path d="M1 5 L5 1 L9 5" stroke="#c0c0c0" stroke-width="1.6" fill="none"/></svg>
<svg style="left:459px;top:460px" width="10" height="6"><path d="M1 1 L5 5 L9 1" stroke="#c0c0c0" stroke-width="1.6" fill="none"/></svg>
<svg style="left:306px;top:477px" width="6" height="10"><path d="M5 1 L1 5 L5 9" stroke="#c0c0c0" stroke-width="1.6" fill="none"/></svg>
<svg style="left:449px;top:477px" width="6" height="10"><path d="M1 1 L5 5 L1 9" stroke="#c0c0c0" stroke-width="1.6" fill="none"/></svg>
<div class="t sf" style="left:303px;top:360px">Mapa: 2</div>
<div class="a btn" style="left:393px;top:499px;width:84px;height:25px"><div class="t sf" style="left:0;width:100%;text-align:center;top:6px"><u>A</u>lterar filtro...</div></div>
<div class="a btn" style="left:255px;top:539px;width:73px;height:25px"><div class="t sf" style="left:0;width:100%;text-align:center;top:6px">Imprimir...</div></div>
<div class="a btn" style="left:335px;top:539px;width:73px;height:25px;border:1px solid #000;box-shadow:inset 1px 1px 0 #fff,inset -1px -1px 0 #808080"><div class="a" style="left:3px;top:3px;width:65px;height:17px;border:1px dotted #000"></div><div class="t sf" style="left:0;width:100%;text-align:center;top:6px"><u>V</u>isualizar</div></div>
<div class="a btn" style="left:415px;top:539px;width:73px;height:25px"><div class="t sf" style="left:0;width:100%;text-align:center;top:6px">Fechar</div></div>
</body></html>
